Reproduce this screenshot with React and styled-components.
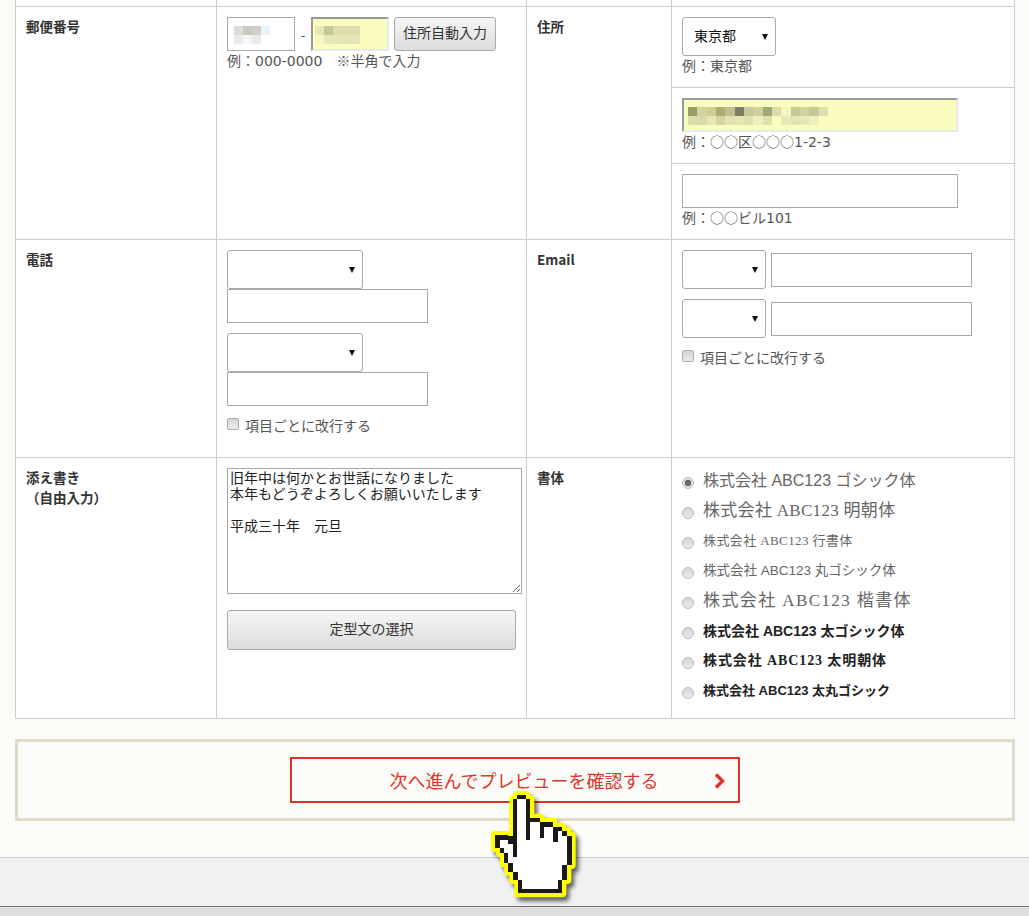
import React from 'react';
import styled, {createGlobalStyle} from 'styled-components';

const cjk = '"Noto Sans CJK JP", "Noto Sans", sans-serif';
const latin = '"DejaVu Sans", "Noto Sans CJK JP", sans-serif';
const serif = '"Liberation Serif", "Noto Sans CJK JP", serif';

const Global = createGlobalStyle`
html, body {
	margin: 0;
	height: 916px;
	overflow: hidden;
	background: #fbfbf8;
	font-family: ${cjk};
	color: #444;
}
`;

const Page = styled.div`
position: relative;
height: 916px;
display: flex;
flex-direction: column;
`;

const FormTable = styled.table`
width: 999px;
margin-left: 15px;
border-collapse: collapse;
table-layout: fixed;
background: #fff;
flex: none;
`;

const Row = styled.tr`
height: ${({h}) => h}px;
`;

const Cell = styled.td`
border: 1px solid #ccc;
border-top: ${({open}) => open ? 'none' : '1px solid #ccc'};
padding: ${({flush}) => flush ? '0' : '10px'};
vertical-align: top;
font-size: 14px;
line-height: 20px;
`;

const Label = styled.th`
border: 1px solid #ccc;
padding: 9px 10px 10px;
vertical-align: top;
text-align: left;
font-size: 13.5px;
line-height: 20px;
font-weight: 700;
color: #333;
`;

const Hint = styled.div`
font-size: 14px;
line-height: 18px;
color: #555;
`;

const Num = styled.span`
font-family: ${latin};
font-size: 14px;
`;

const Inline = styled.div`
display: flex;
align-items: ${({align = 'flex-start'}) => align};
gap: ${({gap = 5}) => gap}px;
margin-top: ${({mt = 0}) => mt}px;
`;

const Field = styled.div`
position: relative;
flex: none;
width: ${({w}) => w}px;
height: ${({h = 34}) => h}px;
margin-top: ${({mt = 0}) => mt}px;
`;

const TextInput = styled.input`
box-sizing: border-box;
display: block;
width: 100%;
height: 100%;
margin: 0;
padding: 0 8px;
background: ${({filled}) => filled ? '#fbfdbe' : '#fff'};
border-style: solid;
border-width: ${({filled}) => filled ? '2px' : '1px'};
border-color: ${({filled}) => filled ? '#9a9a9a #e9e9ea #e9e9ea #9a9a9a' : '#a9a9a9'};
outline: none;
`;

const Mosaic = styled.div`
position: absolute;
top: ${({top}) => top}px;
left: ${({left}) => left}px;
display: grid;
grid-template-columns: repeat(${({cols}) => cols}, ${({cell = 9}) => cell}px);
grid-auto-rows: 9px;
`;

const Pixel = styled.i`
display: block;
`;

const Blur = ({top, left, cell, rows}) => <Mosaic top={top} left={left} cell={cell} cols={rows[0].length}>
	{rows.flat().map((color, i) => <Pixel key={i} style={{background: color}} />)}
</Mosaic>;

const SelectBox = styled.select`
box-sizing: border-box;
display: block;
width: 100%;
height: 100%;
margin: 0;
padding: 0 0 3px 11px;
appearance: none;
background: #fff;
border: 1px solid #a9a9a9;
border-radius: 3px;
font: 14px ${cjk};
color: #111;
outline: none;
`;

const Arrow = styled.span`
position: absolute;
top: 17px;
right: 8px;
border-style: solid;
border-width: 6px 3.5px 0;
border-color: #111 transparent transparent;
pointer-events: none;
`;

const Select = ({w, mt, value}) => <Field w={w} h={39} mt={mt}>
	<SelectBox defaultValue={value}>
		<option value={value}>{value}</option>
	</SelectBox>
	<Arrow />
</Field>;

const Dash = styled.span`
width: 16px;
line-height: 34px;
text-align: center;
font-size: 14px;
color: #555;
`;

const Button = styled.button`
box-sizing: border-box;
display: block;
flex: none;
width: ${({w}) => w}px;
height: ${({h}) => h}px;
margin: ${({mt = 0}) => mt}px 0 0 ${({ml = 0}) => ml}px;
padding: 0 0 3px;
background: linear-gradient(#f6f6f6, #dcdcdc);
border: 1px solid #a9a9a9;
border-radius: 3px;
font: 14px ${cjk};
color: #333;
`;

const CheckRow = styled.label`
display: flex;
align-items: center;
gap: 6px;
margin-top: ${({mt}) => mt}px;
font-size: 14px;
line-height: 20px;
color: #555;
`;

const Check = styled.input`
box-sizing: border-box;
appearance: none;
width: 12px;
height: 12px;
margin: -1px 0 0;
background: linear-gradient(#d4d4d4, #ececec);
border: 1px solid #adadad;
border-radius: 2px;
`;

const AddressRow = styled.div`
box-sizing: border-box;
height: ${({h}) => h}px;
padding: 10px 10px 0;
border-bottom: ${({last}) => last ? 'none' : '1px solid #ccc'};
`;

const Memo = styled.textarea`
box-sizing: border-box;
display: block;
width: 295px;
height: 126px;
margin: 0;
padding: 0 2px;
border: 1px solid #a9a9a9;
font: 14px/16px ${cjk};
color: #222;
outline: none;
`;

const FontList = styled.div`
display: flex;
flex-direction: column;
margin-top: -2px;
`;

const FontRow = styled.label`
display: flex;
align-items: center;
gap: 9px;
height: 30px;
`;

const Radio = styled.input`
box-sizing: border-box;
appearance: none;
flex: none;
width: 12px;
height: 12px;
margin: 5px 0 0;
border-radius: 50%;
border: 1px solid #bbb;
background: ${({checked}) => checked
	? 'radial-gradient(circle, #666 0 3px, #ddd 3.5px)'
	: 'linear-gradient(#d6d6d6, #ececec)'};
`;

const FontName = styled.span`
font-family: ${({face}) => face === 'serif' ? serif : '"Liberation Sans", "Noto Sans CJK JP", sans-serif'};
font-size: ${({size}) => size}px;
font-weight: ${({bold}) => bold ? 700 : 400};
letter-spacing: ${({track = 0}) => track}px;
color: ${({bold}) => bold ? '#222' : '#666'};
white-space: nowrap;
`;

const NextPanel = styled.div`
box-sizing: border-box;
flex: none;
width: 1000px;
height: 82px;
margin: 20px 0 0 15px;
padding-top: 15px;
background: #fbfbf8;
border: 3px solid #dfdbc8;
display: flex;
justify-content: center;
`;

const NextButton = styled.a`
box-sizing: border-box;
position: relative;
width: 450px;
height: 46px;
padding-left: 18px;
display: flex;
align-items: center;
justify-content: center;
border: 2px solid #e0302c;
font-size: 18px;
color: #e0352b;
`;

const Chevron = styled.svg`
position: absolute;
right: 12px;
top: 14px;
`;

const Footer = styled.div`
flex: 1;
margin-top: 36px;
background: #f1f1f1;
border-top: 1px solid #ccc;
`;

const BottomBar = styled.div`
flex: none;
height: 9px;
background: #dddee0;
border-top: 1px solid #777;
`;

const HandCursor = styled.svg`
position: absolute;
left: 485px;
top: 785px;
overflow: visible;
filter: drop-shadow(3px 4px 2px rgba(0, 0, 0, .6));
`;

const handOutline = '97,30 122,30 122,42 136,42 136,98 165,98 165,110 205,110 205,125 232,125 232,138 247,138 247,152 260,152 260,240 247,240 247,285 232,285 232,325 100,325 100,285 85,285 85,260 70,260 70,235 57,235 57,205 45,205 45,190 30,190 30,150 70,150 70,152 85,152 85,42 97,42';
const handFill = '97,42 122,42 122,165 136,165 136,110 165,110 165,160 178,160 178,125 205,125 205,170 218,170 218,138 232,138 232,152 247,152 247,240 232,240 232,285 218,285 218,313 112,313 112,285 100,285 100,260 85,260 85,235 70,235 70,205 57,205 57,190 45,190 45,165 70,165 70,178 85,178 85,215 97,215';

const Hand = () => <HandCursor width='100' height='120' viewBox='0 0 300 360'>
	<polygon points={handOutline} fill='#ffff00' stroke='#ffff00' strokeWidth='24' strokeLinejoin='round' />
	<polygon points={handOutline} fill='#1a1a1a' shapeRendering='crispEdges' />
	<polygon points={handFill} fill='#fff' shapeRendering='crispEdges' />
</HandCursor>;

const fonts = [
	{name: '株式会社 ABC123 ゴシック体', size: 16},
	{name: '株式会社 ABC123 明朝体', size: 17, face: 'serif', track: .3},
	{name: '株式会社 ABC123 行書体', size: 13, face: 'serif', track: .4},
	{name: '株式会社 ABC123 丸ゴシック体', size: 13.5},
	{name: '株式会社 ABC123 楷書体', size: 17, face: 'serif', track: 1.4},
	{name: '株式会社 ABC123 太ゴシック体', size: 14, bold: true},
	{name: '株式会社 ABC123 太明朝体', size: 14, face: 'serif', bold: true, track: .9},
	{name: '株式会社 ABC123 太丸ゴシック', size: 13, bold: true},
];

const postalA = [
	['#e0d9de', '#c8c9bf', '#d5cdc9', '#e9f4fa'],
	['#ebe9ea', '#f6f6f6', '#ebe9e9', '#ffffff'],
];
const postalB = [
	['#e4e8b4', '#c5c99a', '#dadfac', '#e0dcae', '#dddcb0'],
	['#f2f6c0', '#e5e9b5', '#e5e8b6', '#e3e5b3', '#e5e7b8'],
];
const street = [
	['#9c9b6e', '#d0d29f', '#cfcd92', '#aeab73', '#c0c08e', '#7b7e60', '#c5c897', '#cfd09c', '#9daa7e', '#dcdcab', '#f3f5bd', '#c3c897', '#d0d29f', '#c6c896', '#dde0ad'],
	['#dcdea8', '#d8dba6', '#e6e8b4', '#d3d49f', '#e2e4af', '#e4e6b3', '#dfe1ac', '#eef0bb', '#dfe1ac', '#fafdbe', '#e7e9b6', '#e3e5b1', '#e7e9b5', '#eef1bd', '#fafdbe'],
];

const memo = '旧年中は何かとお世話になりました\n本年もどうぞよろしくお願いいたします\n\n平成三十年　元旦';

const App = () => <Page>
	<Global />
	<FormTable>
		<colgroup>
			<col style={{width: 201}} />
			<col style={{width: 310}} />
			<col style={{width: 145}} />
			<col style={{width: 343}} />
		</colgroup>
		<tbody>
			<Row h={6}>
				<Cell open flush />
				<Cell open flush />
				<Cell open flush />
				<Cell open flush />
			</Row>
			<Row h={233}>
				<Label>郵便番号</Label>
				<Cell>
					<Inline gap={0}>
						<Field w={68}>
							<TextInput />
							<Blur top={9} left={7} rows={postalA} />
						</Field>
						<Dash>-</Dash>
						<Field w={78}>
							<TextInput filled />
							<Blur top={9} left={4} rows={postalB} />
						</Field>
						<Button w={102} h={34} ml={5}>住所自動入力</Button>
					</Inline>
					<Hint>例：<Num>000-0000</Num>　※半角で入力</Hint>
				</Cell>
				<Label>住所</Label>
				<Cell flush>
					<AddressRow h={81}>
						<Select w={94} value='東京都' />
						<Hint>例：東京都</Hint>
					</AddressRow>
					<AddressRow h={76}>
						<Field w={276}>
							<TextInput filled />
							<Blur top={9} left={6} cell={9.33} rows={street} />
						</Field>
						<Hint>例：○○区○○○<Num>1-2-3</Num></Hint>
					</AddressRow>
					<AddressRow h={75} last>
						<Field w={276}>
							<TextInput />
						</Field>
						<Hint>例：○○ビル<Num>101</Num></Hint>
					</AddressRow>
				</Cell>
			</Row>
			<Row h={218}>
				<Label>電話</Label>
				<Cell>
					<Select w={136} />
					<Field w={201}><TextInput /></Field>
					<Select w={136} mt={10} />
					<Field w={201}><TextInput /></Field>
					<CheckRow mt={9}><Check type='checkbox' />項目ごとに改行する</CheckRow>
				</Cell>
				<Label>Email</Label>
				<Cell>
					<Inline>
						<Select w={84} />
						<Field w={201} mt={3}><TextInput /></Field>
					</Inline>
					<Inline mt={10}>
						<Select w={84} />
						<Field w={201} mt={3}><TextInput /></Field>
					</Inline>
					<CheckRow mt={9}><Check type='checkbox' />項目ごとに改行する</CheckRow>
				</Cell>
			</Row>
			<Row h={261}>
				<Label>添え書き<br />（自由入力）</Label>
				<Cell>
					<Memo defaultValue={memo} />
					<Button w={289} h={40} mt={16}>定型文の選択</Button>
				</Cell>
				<Label>書体</Label>
				<Cell>
					<FontList>
						{fonts.map(({name, ...font}, i) => <FontRow key={name}>
							<Radio type='radio' name='font' checked={i === 0} readOnly />
							<FontName {...font}>{name}</FontName>
						</FontRow>)}
					</FontList>
				</Cell>
			</Row>
		</tbody>
	</FormTable>
	<NextPanel>
		<NextButton>
			次へ進んでプレビューを確認する
			<Chevron width='12' height='16' viewBox='0 0 12 16'>
				<path d='M2 1.5 L8.5 8 L2 14.5' fill='none' stroke='#e0302c' strokeWidth='3.4' />
			</Chevron>
		</NextButton>
	</NextPanel>
	<Footer />
	<BottomBar />
	<Hand />
</Page>;

export default App;
